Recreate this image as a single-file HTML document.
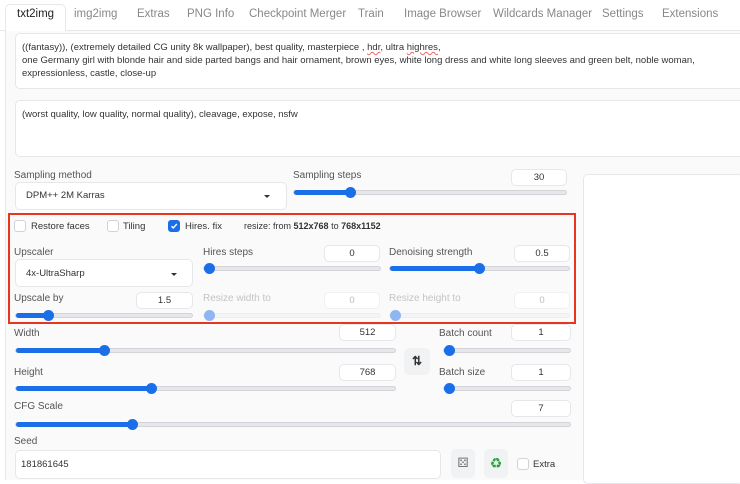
<!DOCTYPE html><html><head><style>
*{box-sizing:border-box;margin:0;padding:0}
body{width:740px;height:480px;overflow:hidden;background:#fff;font-family:"Liberation Sans",sans-serif;font-size:10px;color:#333;position:relative}
.a{position:absolute}
.tab{position:absolute;top:8px;font-size:11.5px;color:#888}
.lbl{position:absolute;font-size:10px;color:#555}
.box{position:absolute;background:#fff;border:1px solid #e5e7eb;border-radius:5px}
.num{position:absolute;background:#fff;border:1px solid #e5e7eb;border-radius:5px;height:17px;text-align:center;font-size:9.5px;line-height:15px;color:#333}
.trk{position:absolute;height:5px;border-radius:3px;background:#e5e7eb;border:1px solid #d4d4d8}
.fill{position:absolute;left:0;top:-1px;height:5px;background:#1a6fe8;border-radius:3px}
.th{position:absolute;width:11px;height:11px;border-radius:50%;background:#1a6fe8;top:-4px}
.dis .fill,.dis .th{background:#8fb6f3}
.cb{position:absolute;width:12px;height:12px;border:1px solid #cfd3d9;border-radius:3px;background:#fff}
.arr{position:absolute;width:0;height:0;border-left:3px solid transparent;border-right:3px solid transparent;border-top:3px solid #333}
</style></head><body>
<div class="a" style="left:0;top:30px;width:740px;height:1px;background:#e5e7eb"></div>
<div class="a" style="left:5px;top:4px;width:61px;height:27px;background:#fff;border:1px solid #e5e7eb;border-bottom:none;border-radius:5px 5px 0 0"></div>
<div class="tab" style="left:17px;color:#222">txt2img</div>
<div class="tab" style="left:74px">img2img</div>
<div class="tab" style="left:137px">Extras</div>
<div class="tab" style="left:187px">PNG Info</div>
<div class="tab" style="left:249px">Checkpoint Merger</div>
<div class="tab" style="left:358px">Train</div>
<div class="tab" style="left:404px">Image Browser</div>
<div class="tab" style="left:493px">Wildcards Manager</div>
<div class="tab" style="left:602px">Settings</div>
<div class="tab" style="left:662px">Extensions</div>
<div class="a" style="left:5px;top:31px;width:735px;height:449px;background:#fafafa;border-left:1px solid #e5e7eb"></div>
<div class="box" style="left:15px;top:33px;width:730px;height:56px;padding:7px 6px;font-size:9.5px;line-height:13px;color:#333">((fantasy)), (extremely detailed CG unity 8k wallpaper), best quality, masterpiece , <span style="text-decoration:underline wavy #e66">hdr</span>, ultra <span style="text-decoration:underline wavy #e66">highres</span>,<br>one Germany girl with blonde hair and side parted bangs and hair ornament, brown eyes, white long dress and white long sleeves and green belt, noble woman,<br>expressionless, castle, close-up</div>
<div class="box" style="left:15px;top:100px;width:730px;height:57px;padding:7px 6px;font-size:9.5px;line-height:13px">(worst quality, low quality, normal quality), cleavage, expose, nsfw</div>
<div class="lbl" style="left:14px;top:170px">Sampling method</div>
<div class="box" style="left:15px;top:182px;width:272px;height:28px"></div>
<div class="a" style="left:26px;top:190px;font-size:9.5px">DPM++ 2M Karras</div>
<div class="arr" style="left:264px;top:195px"></div>
<div class="lbl" style="left:293px;top:170px">Sampling steps</div>
<div class="num" style="left:511px;top:169px;width:56px">30</div>
<div class="trk" style="left:293px;top:190px;width:274px"><div class="fill" style="width:58px"></div><div class="th" style="left:51px"></div></div>
<div class="box" style="left:583px;top:174px;width:160px;height:310px"></div>
<div class="a" style="left:8px;top:213px;width:568px;height:111px;border:2px solid #e8361e"></div>
<div class="cb" style="left:14px;top:220px"></div><div class="a" style="left:31px;top:221px;font-size:9.5px">Restore faces</div>
<div class="cb" style="left:107px;top:220px"></div><div class="a" style="left:123px;top:221px;font-size:9.5px">Tiling</div>
<div class="cb" style="left:168px;top:220px;background:#1a6fe8;border-color:#1a6fe8"><svg width="10" height="10" viewBox="0 0 10 10" style="position:absolute;left:0;top:0"><path d="M2.5 5.2L4.3 7 7.8 3" stroke="#fff" stroke-width="1.4" fill="none"/></svg></div><div class="a" style="left:185px;top:221px;font-size:9.5px">Hires. fix</div>
<div class="a" style="left:244px;top:221px;font-size:9px">resize: from <b>512x768</b> to <b>768x1152</b></div>
<div class="lbl" style="left:14px;top:247px">Upscaler</div>
<div class="box" style="left:15px;top:259px;width:178px;height:28px"></div>
<div class="a" style="left:26px;top:268px;font-size:9.5px">4x-UltraSharp</div>
<div class="arr" style="left:171px;top:273px"></div>
<div class="lbl" style="left:203px;top:247px">Hires steps</div>
<div class="num" style="left:324px;top:245px;width:56px">0</div>
<div class="trk" style="left:203px;top:266px;width:178px"><div class="fill" style="width:6px"></div><div class="th" style="left:0"></div></div>
<div class="lbl" style="left:389px;top:247px">Denoising strength</div>
<div class="num" style="left:514px;top:245px;width:56px">0.5</div>
<div class="trk" style="left:389px;top:266px;width:181px"><div class="fill" style="width:90px"></div><div class="th" style="left:84px"></div></div>
<div class="lbl" style="left:14px;top:293px">Upscale by</div>
<div class="num" style="left:136px;top:292px;width:57px">1.5</div>
<div class="trk" style="left:15px;top:313px;width:178px"><div class="fill" style="width:33px"></div><div class="th" style="left:27px"></div></div>
<div class="lbl" style="left:203px;top:293px;color:#c4c4c4">Resize width to</div>
<div class="num" style="left:324px;top:292px;width:56px;color:#bbb;border-color:#f0f0f0">0</div>
<div class="trk dis" style="left:203px;top:313px;width:178px;border-color:#eee;background:#f3f4f6"><div class="th" style="left:0"></div></div>
<div class="lbl" style="left:389px;top:293px;color:#c4c4c4">Resize height to</div>
<div class="num" style="left:514px;top:292px;width:56px;color:#bbb;border-color:#f0f0f0">0</div>
<div class="trk dis" style="left:389px;top:313px;width:181px;border-color:#eee;background:#f3f4f6"><div class="th" style="left:0"></div></div>
<div class="lbl" style="left:14px;top:328px">Width</div>
<div class="num" style="left:339px;top:324px;width:57px">512</div>
<div class="trk" style="left:15px;top:348px;width:381px"><div class="fill" style="width:90px"></div><div class="th" style="left:83px"></div></div>
<div class="a" style="left:404px;top:348px;width:26px;height:27px;background:#f1f2f4;border-radius:5px;text-align:center;line-height:26px;font-size:12px;font-weight:bold;color:#333">⇅</div>
<div class="lbl" style="left:439px;top:328px">Batch count</div>
<div class="num" style="left:511px;top:324px;width:60px">1</div>
<div class="trk" style="left:443px;top:348px;width:128px"><div class="fill" style="width:6px"></div><div class="th" style="left:0"></div></div>
<div class="lbl" style="left:14px;top:367px">Height</div>
<div class="num" style="left:339px;top:364px;width:57px">768</div>
<div class="trk" style="left:15px;top:386px;width:381px"><div class="fill" style="width:137px"></div><div class="th" style="left:130px"></div></div>
<div class="lbl" style="left:439px;top:367px">Batch size</div>
<div class="num" style="left:511px;top:364px;width:60px">1</div>
<div class="trk" style="left:443px;top:386px;width:128px"><div class="fill" style="width:6px"></div><div class="th" style="left:0"></div></div>
<div class="lbl" style="left:14px;top:401px">CFG Scale</div>
<div class="num" style="left:511px;top:400px;width:60px">7</div>
<div class="trk" style="left:15px;top:422px;width:556px"><div class="fill" style="width:118px"></div><div class="th" style="left:111px"></div></div>
<div class="lbl" style="left:14px;top:436px">Seed</div>
<div class="box" style="left:15px;top:450px;width:426px;height:29px"></div>
<div class="a" style="left:21px;top:459px;font-size:9.5px">181861645</div>
<div class="a" style="left:451px;top:449px;width:24px;height:29px;background:#f1f2f4;border-radius:5px;text-align:center;line-height:28px;font-size:13px;color:#777">⚄</div>
<div class="a" style="left:484px;top:449px;width:24px;height:29px;background:#f1f2f4;border-radius:5px;text-align:center;line-height:28px;font-size:14px;color:#22a33a">♻</div>
<div class="cb" style="left:517px;top:458px"></div><div class="a" style="left:533px;top:459px;font-size:9.5px">Extra</div>
</body></html>
